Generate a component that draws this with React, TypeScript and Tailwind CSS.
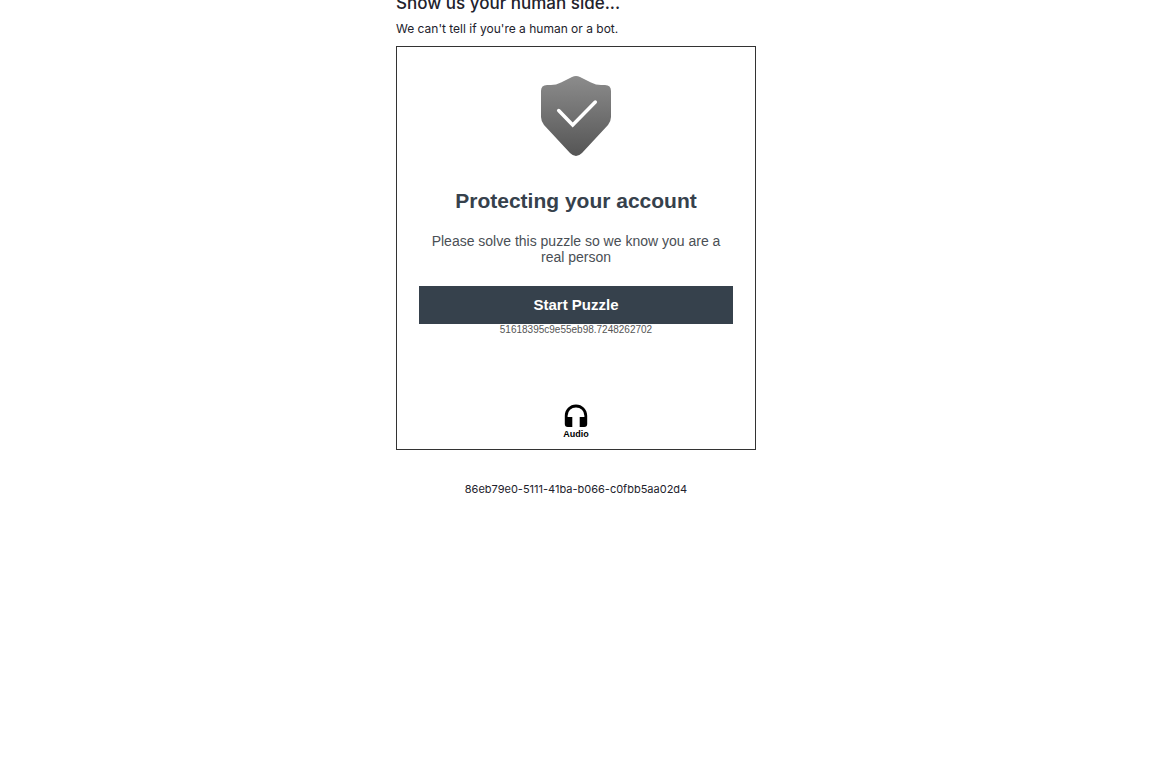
export default function App() {
  return (
    <div className="min-h-screen overflow-hidden bg-white font-['Inter',sans-serif] text-[#22222c]">
      <main className="mx-auto w-full max-w-[360px]">
        <h1 className="-mt-[9px] text-[17px] leading-6 font-medium">Show us your human side...</h1>
        <p className="mt-1.5 text-xs leading-4">We can't tell if you're a human or a bot.</p>
        <section className="mt-[9px] flex h-[404px] flex-col items-center border border-[#333] px-[22px] pt-7 pb-[9px] text-center font-['Liberation_Sans',sans-serif] text-[#36414c]">
          <svg viewBox="0 0 72 82" className="h-[82px] w-[72px]" aria-hidden="true">
            <defs>
              <linearGradient id="shield" x1="0" y1="0" x2="0" y2="1">
                <stop offset="0" stopColor="#8c8c8c" />
                <stop offset="1" stopColor="#555" />
              </linearGradient>
            </defs>
            <path d="M32 2Q36 0 40 2L51 7.500Q56 10 61 10H65Q71 10 71 16V42Q71 46 68 50L42 78Q36 84 30 78L4 50Q1 46 1 42V16Q1 10 7 10H11Q16 10 21 7.500Z" fill="url(#shield)" />
            <path d="M18.700 35.500L32.700 50L55.300 27" fill="none" stroke="white" strokeWidth="3.500" strokeLinecap="round" />
          </svg>
          <h2 className="mt-8 text-[21px] leading-6 font-bold">Protecting your account</h2>
          <p className="mt-5 text-sm leading-4 text-[#4a4f55]">Please solve this puzzle so we know you are a real person</p>
          <button type="button" className="mt-[21px] h-[38px] w-full shrink-0 bg-[#36414c] text-[15px] font-bold text-white">Start Puzzle</button>
          <p className="text-[10px] leading-3 text-[#555]">51618395c9e55eb98.7248262702</p>
          <button type="button" className="mt-auto flex flex-col items-center text-[9px] leading-3 font-bold text-black">
            <svg viewBox="0 0 24 24" className="h-6 w-6" aria-hidden="true">
              <path d="M12 .6C5.700 .6 .8 5.500 .8 11.800V20a3 3 0 0 0 3 3h4.500V13H3.600v-1.200a8.400 8.400 0 0 1 16.800 0V13h-4.700v10h4.500a3 3 0 0 0 3-3v-8.200C23.200 5.500 18.300 .6 12 .6z" />
            </svg>
            Audio
          </button>
        </section>
        <p className="mt-[31px] text-center text-[11px] leading-4">86eb79e0-5111-41ba-b066-c0fbb5aa02d4</p>
      </main>
    </div>
  );
}
